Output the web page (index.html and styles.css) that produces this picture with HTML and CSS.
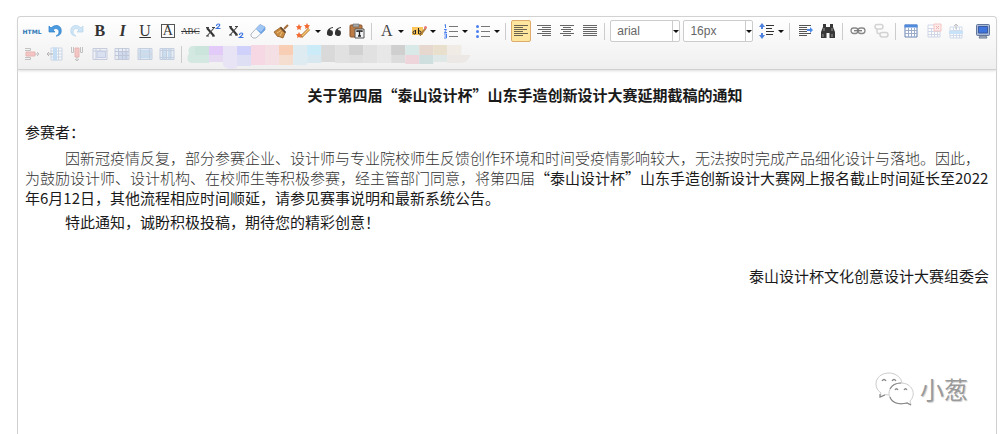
FILE: index.html
```html
<!DOCTYPE html>
<html lang="zh-CN">
<head>
<meta charset="utf-8">
<title>通知编辑</title>
<link rel="stylesheet" href="styles.css">
</head>
<body>
<main class="editor">
  <div class="toolbar" role="toolbar" aria-label="编辑工具栏">
    <div class="row">
      <div class="group g-format">
        <button class="btn html" aria-label="源代码">HTML</button>
        <button class="btn" aria-label="撤销"><svg viewBox="0 0 16 16"><path d="M2 3v6h6L6 7c3-3 6-1 6 2 0 2-2 4-3 4 4 0 6-3 5-7-1-4-6-5-10-1z" fill="#4a9be0" stroke="#2b7cc9" stroke-width=".7"/></svg></button>
        <button class="btn faded" aria-label="重做"><svg viewBox="0 0 16 16"><path d="M14 3v6H8l2-2C7 4 4 6 4 9c0 2 2 4 3 4-4 0-6-3-5-7 1-4 6-5 10-1z" fill="#8fc6f0" stroke="#4b9cd8" stroke-width=".7"/></svg></button>
        <button class="btn serif bold" aria-label="加粗">B</button>
        <button class="btn serif bold italic" aria-label="斜体">I</button>
        <button class="btn serif underline" aria-label="下划线">U</button>
        <button class="btn serif" aria-label="字符边框"><span class="boxed">A</span></button>
        <button class="btn serif strike" aria-label="删除线">ABC</button>
        <button class="btn" aria-label="上标"><svg viewBox="0 0 16 16"><path d="M2 5l7 8" stroke="#333" stroke-width="2"/><path d="M9 5l-7 8" stroke="#444" stroke-width="1.100"/><path d="M1 4.500h3M1 13h3M7 4.500h3M7 13h3" stroke="#444"/><path d="M11.500 3q0-2 2-2c2.500 0 1 2.500-2 4.500h4" fill="none" stroke="#3b73e0" stroke-width="1.100"/></svg></button>
        <button class="btn" aria-label="下标"><svg viewBox="0 0 16 16"><path d="M2 4l7 8" stroke="#333" stroke-width="2"/><path d="M9 4l-7 8" stroke="#444" stroke-width="1.100"/><path d="M1 3.500h3M1 12h3M7 3.500h3M7 12h3" stroke="#444"/><path d="M11.500 12q0-2 2-2c2.500 0 1 2.500-2 4.500h4" fill="none" stroke="#3b73e0" stroke-width="1.100"/></svg></button>
        <button class="btn" aria-label="清除格式"><svg viewBox="0 0 16 16"><path d="M1 11L10 1.500l5 2.500v3L6 15H3l-2-2z" fill="#fafafa" stroke="#9aa5b8" stroke-width=".8"/><path d="M6 6l4-4.500 5 2.500v3l-4 4z" fill="#6ba2e8"/><path d="M6 6l4-4.500L15 4l-4 5z" fill="#a0c6f4"/></svg></button>
        <button class="btn" aria-label="格式刷"><svg viewBox="0 0 16 16"><path d="M15 2l-4 4" stroke="#a36b35" stroke-width="2"/><path d="M8 4l4.500 5L10 15l-4-1.500H4.500L1 9z" fill="#c98b42" stroke="#8d5a25" stroke-width=".8"/><path d="M7.500 4.500l5 5" stroke="#5d442e" stroke-width="1.500"/><path d="M4 10l4-2.500M7 13l2-4" stroke="#efc37d"/></svg></button>
        <span class="split"><button class="btn" aria-label="自动排版"><svg viewBox="0 0 16 16"><path d="M3 1l1 2 2 .3L4.500 5 5 7 3 6 1 7l.5-2L0 3.300 2 3zM11 0l1 2 2 .3L12.500 4l.5 2-2-1-2 1 .5-2L8 2.300 10 2zM3 9l1 2 2 .3L4.500 13l.5 2-2-1-2 1 .5-2L0 11.300 2 11z" fill="#f36b32"/><path d="M5 14l8-8" stroke="#b3783b" stroke-width="3"/><path d="M6 13l7-7" stroke="#f7c66f" stroke-width="1.500"/></svg></button><button class="drop" aria-label="自动排版选项"></button></span>
        <button class="btn" aria-label="引用"><svg viewBox="0 0 16 16"><path d="M7 4Q1 5 1 9.500A3 3 0 1 0 4 7q0-2 3-2zM15 4Q9 5 9 9.500A3 3 0 1 0 12 7q0-2 3-2z" fill="#333"/></svg></button>
        <button class="btn" aria-label="纯文本粘贴"><svg viewBox="0 0 16 16"><rect x="1" y="2" width="12" height="12" rx="1" fill="#bd7c45" stroke="#8c5529"/><path d="M4 1h6v3H4z" fill="#aaa" stroke="#666" stroke-width=".6"/><path d="M6 6h9v9H6z" fill="#f3f4f6" stroke="#555"/><path d="M8 9V8h5v1M10.500 8v5M9 13h3" fill="none" stroke="#222" stroke-width="1.300"/></svg></button>
      </div>
      <span class="sep"></span>
      <div class="group g-color">
        <span class="split"><button class="btn serif fore" aria-label="字体颜色">A</button><button class="drop" aria-label="字体颜色选项"></button></span>
        <span class="split"><button class="btn" aria-label="背景色"><svg viewBox="0 0 16 16"><path d="M1 4h11v8H1z" fill="#fbc75c"/><path d="M4.500 7v4M4.500 8.500c-.8-1.200-2.500-.5-2.500 1s1.700 2 2.500 1M7.500 5v6M7.500 8.500c.8-1.200 2.500-.5 2.500 1s-1.700 2-2.500 1" fill="none" stroke="#222"/><path d="M9 13l1-3 4-5 1 1-4 5z" fill="#c68c3f" stroke="#76501f" stroke-width=".5"/><circle cx="14.500" cy="4.500" r="1.500" fill="#e67878"/></svg></button><button class="drop" aria-label="背景色选项"></button></span>
        <span class="split"><button class="btn" aria-label="有序列表"><svg viewBox="0 0 16 16"><path d="M6 3.500h9M6 8.500h9M6 13.500h9" stroke="#777"/><path d="M1.500 2l1-.5v3.500M1 6.500h2.500L1.500 9.500h2.500M1 11h2.500v4H1M1.500 13h2" fill="none" stroke="#4b80ee"/></svg></button><button class="drop" aria-label="有序列表选项"></button></span>
        <span class="split"><button class="btn" aria-label="无序列表"><svg viewBox="0 0 16 16"><path d="M6 3.500h9M6 8.500h9M6 13.500h9" stroke="#777"/><g fill="#4b80ee"><circle cx="2.500" cy="3.500" r="1.500"/><circle cx="2.500" cy="8.500" r="1.500"/><circle cx="2.500" cy="13.500" r="1.500"/></g></svg></button><button class="drop" aria-label="无序列表选项"></button></span>
      </div>
      <span class="sep"></span>
      <div class="group g-align">
        <button class="btn active" aria-label="居左对齐" aria-pressed="true"><svg viewBox="0 0 16 16"><path d="M1 2.500h14M1 4.500h9M1 6.500h13M1 8.500h9M1 10.500h14M1 12.500h9" stroke="#69634f"/></svg></button>
        <button class="btn" aria-label="居右对齐"><svg viewBox="0 0 16 16"><path d="M1 2.500h14M6 4.500h9M2 6.500h13M6 8.500h9M1 10.500h14M6 12.500h9" stroke="#666"/></svg></button>
        <button class="btn" aria-label="居中对齐"><svg viewBox="0 0 16 16"><path d="M1 2.500h14M4 4.500h8M2 6.500h12M4 8.500h8M1 10.500h14M4 12.500h8" stroke="#666"/></svg></button>
        <button class="btn" aria-label="两端对齐"><svg viewBox="0 0 16 16"><path d="M1 2.500h14M1 4.500h14M1 6.500h14M1 8.500h14M1 10.500h14M1 12.500h14" stroke="#666"/></svg></button>
      </div>
      <span class="sep"></span>
      <div class="group g-font">
        <span class="combo"><select aria-label="字体"><option>arial</option></select></span>
        <span class="combo"><select aria-label="字号"><option>16px</option></select></span>
        <span class="split"><button class="btn" aria-label="行间距"><svg viewBox="0 0 16 16"><path d="M3 0l3 4H4v2H2V4H0zM3 16l3-4H4v-2H2v2H0z" fill="#4e82de"/><path d="M7 2.500h8M7 5.500h6M7 8.500h8M7 11.500h7" stroke="#333" stroke-width="1.200"/></svg></button><button class="drop" aria-label="行间距选项"></button></span>
      </div>
      <span class="sep"></span>
      <div class="group g-pair">
        <button class="btn" aria-label="首行缩进"><svg viewBox="0 0 16 16"><path d="M2 2.500h12M2 4.500h8M2 6.500h8M2 8.500h8M2 10.500h12M2 12.500h8" stroke="#555"/><path d="M10 6h3V4l3 3-3 3V8h-3z" fill="#4b88e8"/></svg></button>
        <button class="btn" aria-label="查询替换"><svg viewBox="0 0 16 16"><path d="M3 1h3v3h4V1h3v3l2 5v6H9.500v-5h-3v5H1V9l2-5z" fill="#383838"/><path d="M4 5v3M12 5v3M3 11v3M12 11v3" stroke="#999"/></svg></button>
      </div>
      <span class="sep"></span>
      <div class="group g-pair">
        <button class="btn" aria-label="超链接"><svg viewBox="0 0 16 16"><g fill="none" stroke="#888" stroke-width="1.300"><rect x="1" y="5" width="7" height="5.500" rx="2.700"/><rect x="8" y="5" width="7" height="5.500" rx="2.700"/></g><path d="M4 7.700h8" stroke="#777" stroke-width="1.300"/></svg></button>
        <button class="btn faded" aria-label="取消链接"><svg viewBox="0 0 16 16"><g fill="none" stroke="#999" stroke-width="1.500"><rect x="2" y="1.500" width="8" height="4.500" rx="2.200"/><path d="M4 6v3q0 2 3 1.500"/><rect x="7" y="9.500" width="8" height="4.500" rx="2.200"/></g></svg></button>
      </div>
      <span class="sep"></span>
      <div class="group g-table">
        <button class="btn" aria-label="插入表格"><svg viewBox="0 0 16 16"><path d="M2 2h12v12H2z" fill="#fff" stroke="#6682b4"/><path d="M1.500 1.500h13v3h-13z" fill="#508adc"/><path d="M2 7.500h12M2 10.500h12M5.500 5v9M8.500 5v9M11.500 5v9" stroke="#9cadcc"/></svg></button>
        <button class="btn faded" aria-label="删除表格"><svg viewBox="0 0 16 16"><path d="M2 2h12v12H2zM2 5.500h12M2 8.500h12M2 11.500h12M5.500 5v9M8.500 5v9M11.500 5v9" fill="#fff" stroke="#94a4cc"/><path d="M8 1h7v7H8z" fill="#fbd4d1" stroke="#ed7770"/><path d="M10 3l3 3M13 3l-3 3" stroke="#dd4640"/></svg></button>
        <button class="btn faded" aria-label="插入行"><svg viewBox="0 0 16 16"><path d="M2 4h12v11H2zM2 7.500h12M2 12.500h12M5.500 4v11M8.500 4v11M11.500 4v11" fill="#fff" stroke="#94add5"/><path d="M1 8h14v3H1z" fill="#7ec1f5"/><path d="M8 6V1M6 3l2-2 2 2" fill="none" stroke="#666"/></svg></button>
        <button class="btn last" aria-label="全屏"><svg viewBox="0 0 16 16"><rect x="1.500" y="1.500" width="13" height="11" rx="1" fill="#a9b9d6" stroke="#61769b"/><path d="M3.500 3.500h9v6.500h-9z" fill="#3f74dc" stroke="#3a5ba0"/><path d="M4 15l1-2h6l1 2z" fill="#b6bfcd" stroke="#6b7890"/></svg></button>
      </div>
    </div>
    <div class="row">
      <div class="group g-cells">
        <button class="btn faded" aria-label="删除行"><svg viewBox="0 0 16 16"><path d="M1 2.500h5.500v2H1M1 13.500h5.500v-2H1" fill="none" stroke="#777"/><path d="M2 6h9v4H2z" fill="#f5807c" stroke="#d35a55"/><path d="M11 8h4M13 6l2 2-2 2" fill="none" stroke="#777"/></svg></button>
        <button class="btn faded" aria-label="插入列"><svg viewBox="0 0 16 16"><path d="M4 2h11v12H4zM4 5h11M4 8h11M4 11h11M11.500 2v12" fill="#fff" stroke="#8ea9d3"/><path d="M6 1.500h4v13H6z" fill="#80bcf2"/><path d="M6 8H0M2 6L0 8l2 2" fill="none" stroke="#555"/></svg></button>
        <button class="btn faded" aria-label="删除列"><svg viewBox="0 0 16 16"><path d="M2.500 1v5.500h2V1M13.500 1v5.500h-2V1" fill="none" stroke="#777"/><path d="M6 2h4v9H6z" fill="#f5807c" stroke="#d35a55"/><path d="M8 11v4M6 13l2 2 2-2" fill="none" stroke="#777"/></svg></button>
        <button class="btn faded" aria-label="合并单元格"><svg viewBox="0 0 16 16"><path d="M1 2.500h14v11H1z" fill="#e7edf8" stroke="#8193bb"/><path d="M1 5h14M4 2v12M8 2v3" stroke="#8193bb"/><path d="M5 5.500h8.500v6H5z" fill="#b3c6ee" stroke="#7f96ce"/></svg></button>
        <button class="btn faded" aria-label="拆分单元格"><svg viewBox="0 0 16 16"><path d="M1 2.500h14v11H1z" fill="#dce5f6" stroke="#8193bb"/><path d="M4 6h10v7H4z" fill="#9bb3e4"/><path d="M1 5.500h14M1 9.500h14M4.500 2v12M8.500 2v12M12 2v12" stroke="#7185b2"/></svg></button>
        <button class="btn faded" aria-label="拆分成行"><svg viewBox="0 0 16 16"><path d="M1 2.500h14v11H1z" fill="#c3d8f2" stroke="#7e99c1"/><path d="M2 4h12v3H2zM2 9h12v3H2z" fill="#8bbbe8"/><path d="M1 8h14M3.500 2v12M12.500 2v12" stroke="#7e99c1"/></svg></button>
        <button class="btn faded" aria-label="拆分成列"><svg viewBox="0 0 16 16"><path d="M1 2.500h14v11H1z" fill="#d0e0f5" stroke="#7e99c1"/><path d="M4 3h3v10H4zM9 3h3v10H9z" fill="#8bbbe8"/><path d="M1 4.500h14M1 11.500h14M3.500 2v12M7.500 2v12M12 2v12" stroke="#7e99c1"/></svg></button>
      </div>
      <span class="sep"></span>
      <svg class="mosaic" viewBox="0 0 284 24" preserveAspectRatio="none" aria-hidden="true">
        <path d="M22 1H5Q0 3 2 8Q-2 16 4 18H22z" fill="#d3e8e1"/><path d="M8 1h14v9H8z" fill="#cbe5dc"/>
        <path d="M22 1h14v16H22z" fill="#e2cbf9"/><path d="M22 10h14v7H22z" fill="#e6d9f2"/>
        <path d="M36 1h14v22q-10 3-14-3z" fill="#e8e3f5"/><path d="M50 1h14v20H50z" fill="#dedff4"/><path d="M50 1h14v9H50z" fill="#cfd1fb"/>
        <path d="M64 0h14v20H64z" fill="#f5d8e3"/><path d="M78 0h14v20H78z" fill="#f3dfe4"/>
        <path d="M92 0h14v20H92z" fill="#f5ddd0"/><path d="M92 0h14v10H92z" fill="#f8ceb4"/>
        <path d="M106 0h14v20h-14z" fill="#deebf1"/><path d="M120 0h14v18h-14z" fill="#d8e8f0"/><path d="M120 0h14v10h-14z" fill="#ccebf9"/>
        <path d="M134 0h14v17h-14z" fill="#d9d9d9"/><path d="M148 0h14v18h-14z" fill="#e1e1e1"/>
        <path d="M162 0h14v18h-14z" fill="#dedede"/><path d="M162 0h14v10h-14z" fill="#d1d1d1"/>
        <path d="M176 0h14v18h-14z" fill="#e1e1e1"/><path d="M190 0h14v18h-14z" fill="#e7e7e7"/>
        <path d="M204 0h14v18h-14z" fill="#dcdcdc"/><path d="M204 0h14v10h-14z" fill="#cfcfcf"/>
        <path d="M218 0h14v10h-14z" fill="#d9e9e7"/><path d="M218 10h14v9h-14z" fill="#eed4db"/>
        <path d="M232 0h14v10h-14z" fill="#e6d7cf"/><path d="M232 10h14v9h-14z" fill="#cfdedf"/>
        <path d="M246 0h14v10h-14z" fill="#e8e0cd"/><path d="M246 10h14v7h-14z" fill="#dfe7e7"/>
        <path d="M260 0h14v10h-14z" fill="#f0ebe4"/><path d="M260 10h23q-2 7-9 8h-14z" fill="#ebe8e5"/>
      </svg>
      <span class="spare"></span>
    </div>
  </div>
  <article class="content">
    <h1 class="title">关于第四届“泰山设计杯”山东手造创新设计大赛延期截稿的通知</h1>
    <p class="greeting">参赛者：</p>
    <p class="para"><span class="thin">因新冠疫情反复，部分参赛企业、设计师与专业院校师生反馈创作环境和时间受疫情影响较大，无法按时完成产品细化设计与落地。因此，为鼓励设计师、设计机构、在校师生等积极参赛，经主管部门同意，将第四届</span>“泰山设计杯”山东手造创新设计大赛网上报名截止时间延长至2022年6月12日，其他流程相应时间顺延，请参见赛事说明和最新系统公告。</p>
    <p class="para">特此通知，诚盼积极投稿，期待您的精彩创意！</p>
    <p class="sign">泰山设计杯文化创意设计大赛组委会</p>
  </article>
  <div class="watermark">
    <svg viewBox="0 0 40 34" aria-hidden="true"><g fill="#fff" stroke="#ccc"><path d="M14 1C6 1 1 6 1 12c0 4 2 7 5 9l-1 4 5-2.500c9 2 17-3 17-10.500C27 6 21 1 14 1z"/><path d="M26 11c-7 0-12 5-12 10.500S19 32 26 32l6-1 4 2-1-4c7-7 2-18-9-18z"/></g><path d="M5 22v3l5-2M15 25c2 6 9 8 17 6l4 2M15 17q3-6 11-6" fill="none" stroke="#888" stroke-width="1.200"/><path d="M7 9q2-3 4 0M17 9q2-3 4 0M20 18q1.500-2.500 3 0M29 18q1.500-2.500 3 0" fill="none" stroke="#888" stroke-width="1.300"/></svg>
    <span>小葱</span>
  </div>
</main>
</body>
</html>
```

FILE: styles.css
```css
* { box-sizing: border-box; }

body {
  margin: 0;
  background: #fff;
  color: #1a1a1a;
  font-family: "Noto Sans CJK SC", sans-serif;
}

.editor {
  position: relative;
  min-height: calc(100vh - 16px);
  margin: 16px 3px 0 17px;
  border: 1px solid #d0d0d0;
  border-bottom: 0;
  border-radius: 4px 4px 0 0;
}

.toolbar {
  display: flex;
  flex-direction: column;
  gap: 1px;
  padding: 3px 3px 4px 4px;
  border-bottom: 1px solid #d0d0d0;
  border-radius: 4px 4px 0 0;
  background: linear-gradient(#fff, #efefef);
  box-shadow: 0 1px 3px #ddd;
}

.row {
  display: flex;
  align-items: center;
  height: 22px;
}

.group {
  display: flex;
  justify-content: space-between;
  flex-basis: 0;
  min-width: min-content;
}

.g-format { flex-grow: 344; }
.g-color { flex-grow: 124; }
.g-align { flex-grow: 89; }
.g-font { flex-grow: 174; }
.g-pair { flex-grow: 43; }
.g-table { flex-grow: 92; }
.g-cells { flex-grow: 155; }

.sep {
  flex: none;
  width: 1px;
  height: 17px;
  margin: 0 5px 0 4px;
  background: #ccc;
}

.btn,
.drop {
  display: flex;
  align-items: center;
  justify-content: center;
  height: 22px;
  margin: 0;
  padding: 0;
  border: 1px solid transparent;
  border-radius: 2px;
  background: none;
  color: #333;
}

.btn { width: 20px; }

.btn svg {
  flex: none;
  width: 16px;
  height: 16px;
}

.faded { opacity: 0.4; }

.last { margin-left: 4px; }

.active {
  border-color: #dcac6c;
  background: #ffe69f;
}

.html {
  color: #2f78b7;
  font: bold 6px "DejaVu Sans", sans-serif;
}

.serif { font: 16px "Liberation Serif", serif; }
.bold { font-weight: bold; }
.italic { font-style: italic; }
.underline { text-decoration: underline; }

.strike {
  font-size: 9px;
  text-decoration: line-through;
}

.boxed {
  width: 14px;
  height: 14px;
  border: 1px solid #555;
  font-size: 14px;
  line-height: 12px;
}

.fore { color: #444; }

.split { display: flex; }

.drop { width: 8px; }

.drop::before,
.combo::after {
  content: "";
  border: 3px solid transparent;
  border-top-color: #111;
  border-bottom-width: 0;
}

.combo {
  display: flex;
  align-items: center;
  width: 70px;
  height: 22px;
  border: 1px solid #ccc;
  border-radius: 2px;
  background: #fff;
}

.combo select {
  flex: 1;
  min-width: 0;
  height: 20px;
  padding: 0 0 0 6px;
  border: 0;
  border-right: 1px solid #ccc;
  appearance: none;
  background: none;
  color: #666;
  font: 12px "Liberation Sans", Arial, sans-serif;
}

.mosaic {
  flex: 284 1 0;
  min-width: 0;
  height: 24px;
  margin-top: 6px;
}

.spare { flex: 521 1 0; }

.content {
  padding: 15px 7px;
  font-size: 15px;
  line-height: 20px;
}

.content p { margin: 0 0 4px; }

.content .title {
  margin: 0 0 17px;
  font-size: 15px;
  font-weight: bold;
  text-align: center;
  text-indent: 36px;
}

.content .greeting { margin-bottom: 6px; }

.para { text-indent: 40px; }

.thin {
  color: #333;
  font-weight: 300;
}

.content .sign {
  margin-top: 34px;
  text-align: right;
}

.watermark {
  position: absolute;
  right: 28px;
  bottom: 27px;
  display: flex;
  align-items: center;
  gap: 5px;
  color: #999;
  font-size: 24px;
  line-height: 36px;
  text-shadow: -1px -1px 0 #fff, 1px 1px 1px #ccc;
}

.watermark svg {
  width: 40px;
  height: 34px;
}
```
